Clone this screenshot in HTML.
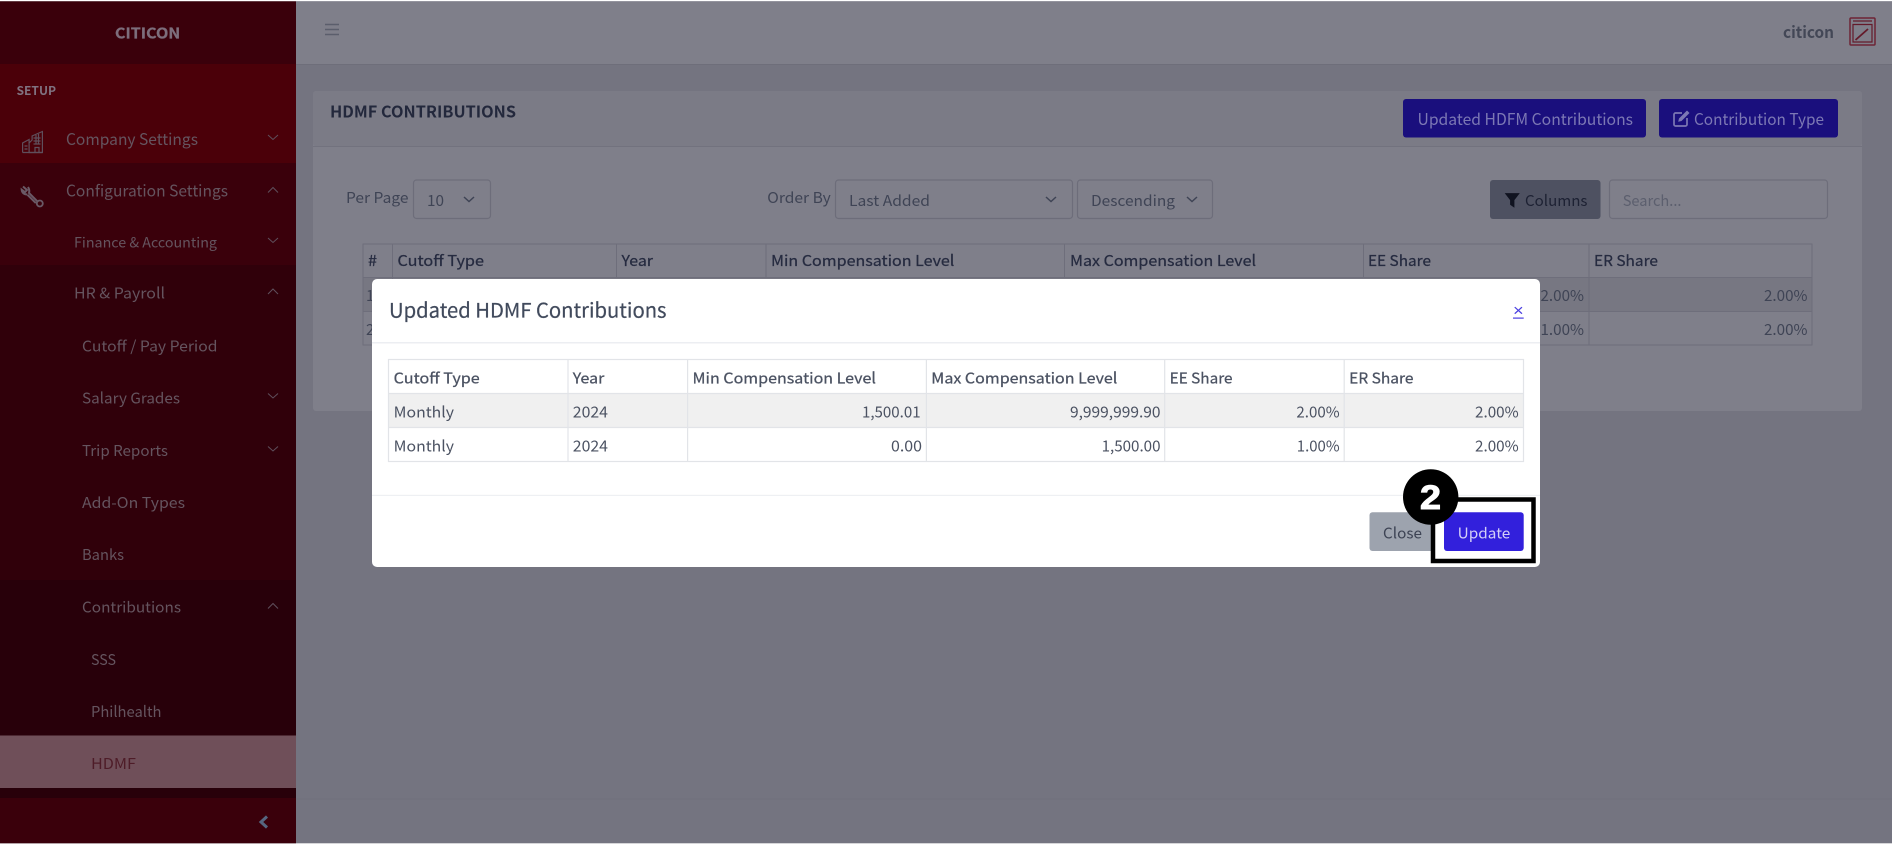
<!DOCTYPE html>
<html lang="en"><head><meta charset="utf-8"><title>HDMF Contributions</title>
<style>
html,body{margin:0;padding:0;background:#fff;width:1892px;height:845px;overflow:hidden}
svg{display:block;font-family:"Noto Sans CJK JP","Liberation Sans",sans-serif}
text{white-space:pre}
.s{fill:#65545f;font-size:15px}
.s2{fill:#65545f;font-size:14px}
.b{font-weight:700}
.h{fill:#262b40;font-size:15px;stroke:#262b40;stroke-width:.25px}
.g{fill:#3f4455;font-size:15px}
.m{fill:#4b5262;font-size:15px}
.mh{fill:#4b5262;font-size:15px;stroke:#4b5262;stroke-width:.25px}
.chev{fill:none;stroke:#5f4f5c;stroke-width:1;}
.sel{fill:#7f7f8a;stroke:#6d6d7a;stroke-width:1.2}
.cv2{fill:none;stroke:#3f4455;stroke-width:1.5}
</style></head><body>
<svg width="1892" height="845" viewBox="0 0 1892 845" xmlns="http://www.w3.org/2000/svg">
<rect width="1892" height="845" fill="#fff"/>
<!-- page background -->
<rect x="0" y="1.3" width="1892" height="842" fill="#747480"/>
<rect x="296" y="1.3" width="1596" height="62.7" fill="#7f7f8a"/>
<rect x="296" y="64" width="1596" height="1" fill="#6e6e7a"/>
<rect x="296" y="798.5" width="1596" height="1" fill="#70707c"/>
<!-- sidebar -->
<rect x="0" y="1.3" width="296" height="842" fill="#3a000b"/>
<rect x="0" y="64" width="296" height="99" fill="#4b0009"/>
<rect x="0" y="265" width="296" height="315" fill="#30000a"/>
<rect x="0" y="580" width="296" height="218" fill="#28000a"/>
<rect x="0" y="735.5" width="296" height="52.5" fill="#6f4f59"/>
<text x="115" y="38.3" class="b" font-size="15" textLength="65.3" lengthAdjust="spacingAndGlyphs" fill="#7d6e7c" stroke="#7d6e7c" stroke-width=".3">CITICON</text>
<text x="16.5" y="95" class="b" font-size="12" textLength="39.5" lengthAdjust="spacingAndGlyphs" fill="#807280">SETUP</text>
<text x="66" y="145" class="s" textLength="132" lengthAdjust="spacingAndGlyphs" style="font-size:16px">Company Settings</text>
<text x="66" y="196.7" class="s" textLength="162" lengthAdjust="spacingAndGlyphs" style="font-size:16px">Configuration Settings</text>
<text x="74" y="247.3" class="s2" textLength="143" lengthAdjust="spacingAndGlyphs">Finance &amp; Accounting</text>
<text x="74" y="298.7" class="s" textLength="91" lengthAdjust="spacingAndGlyphs">HR &amp; Payroll</text>
<text x="82" y="351.3" class="s" textLength="135.5" lengthAdjust="spacingAndGlyphs">Cutoff / Pay Period</text>
<text x="82" y="403.3" class="s" textLength="98" lengthAdjust="spacingAndGlyphs">Salary Grades</text>
<text x="82" y="456" class="s" textLength="86" lengthAdjust="spacingAndGlyphs">Trip Reports</text>
<text x="82" y="508" class="s" textLength="103" lengthAdjust="spacingAndGlyphs">Add-On Types</text>
<text x="82" y="560" class="s" textLength="42" lengthAdjust="spacingAndGlyphs">Banks</text>
<text x="82" y="612.7" class="s" textLength="99" lengthAdjust="spacingAndGlyphs">Contributions</text>
<text x="91" y="665" class="s" textLength="25" lengthAdjust="spacingAndGlyphs">SSS</text>
<text x="91" y="717" class="s" textLength="70.5" lengthAdjust="spacingAndGlyphs">Philhealth</text>
<text x="91" y="769" class="s" textLength="45" lengthAdjust="spacingAndGlyphs" style="fill:#4e1c28">HDMF</text>
<!-- sidebar chevrons -->
<path class="chev" d="M268 135l5 4.5 5-4.5"/>
<path class="chev" d="M268 192.500l5-5 5 5"/>
<path class="chev" d="M268 238l5 4.500 5-4.500"/>
<path class="chev" d="M268 294l5-5 5 5"/>
<path class="chev" d="M268 393.500l5 4.500 5-4.500"/>
<path class="chev" d="M268 446.500l5 4.500 5-4.500"/>
<path class="chev" d="M268 608.500l5-5 5 5"/>
<path d="M267 816.500l-6 5.500 6 5.500" fill="none" stroke="#566680" stroke-width="3"/>
<!-- building icon -->
<g fill="none" stroke="#5f4f5c" stroke-width="1.200">
<path d="M22.600 152.500v-9.500l6.500-3.500v13M29.100 143l3-3v-4l10.300-4.500v21h-13.300z"/>
<path d="M22.600 152.500h19.800M35 152.500v-5h4v5"/>
<path d="M33.500 138h7M33.500 141h7M33.500 144h7M36 135v9.500M38.500 134v10.500M24.500 146h3M24.500 149h3"/>
</g>
<!-- wrench icon -->
<path d="M23 186.500l4 3.500-2 2.200-3.300-2.500c.2 3 2.300 4.800 5.600 4.800" fill="none" stroke="#6a5966" stroke-width="2"/>
<path d="M28 187c1.500 2.500 1.500 4.500 1 6l8.300 8.300M27.500 194.800l8.300 8.300" fill="none" stroke="#6a5966" stroke-width="2"/>
<circle cx="39.800" cy="203.500" r="3" fill="none" stroke="#6a5966" stroke-width="1.800"/>
<!-- topbar -->
<path d="M325 24.500h14M325 29.500h14M325 34.500h14" stroke="#5b5e6c" stroke-width="1.500" fill="none"/>
<text x="1783" y="38" class="b" font-size="16" fill="#434756" textLength="51" lengthAdjust="spacingAndGlyphs">citicon</text>
<g fill="none" stroke="#641a2a">
<rect x="1850" y="18" width="25" height="27" rx="1" stroke-width="1.500" stroke="#6e2434"/>
<path d="M1853 21h19M1853 24.500h19v17.500h-19z" stroke-width="1.200"/>
<path d="M1855.500 40l12.500-11" stroke-width="1.800"/>
</g>
<!-- card -->
<rect x="313" y="91" width="1549" height="320" rx="3" fill="#7f7f8a"/>
<rect x="313" y="91" width="1549" height="55" rx="3" fill="#7b7b86"/>
<rect x="313" y="146" width="1549" height="1" fill="#72727e"/>
<text x="330" y="117.700" class="b" font-size="16" fill="#23283c" textLength="186" lengthAdjust="spacingAndGlyphs">HDMF CONTRIBUTIONS</text>
<rect x="1403" y="99" width="243" height="38.500" rx="3" fill="#1a0f7d"/>
<text x="1417.500" y="125" font-size="16" fill="#7c78b4" textLength="215.500" lengthAdjust="spacingAndGlyphs">Updated HDFM Contributions</text>
<rect x="1659" y="99" width="179" height="38.500" rx="3" fill="#1a0f7d"/>
<path d="M1682 113h-6.500a1.500 1.500 0 0 0-1.500 1.500v10a1.500 1.500 0 0 0 1.500 1.500h10a1.500 1.500 0 0 0 1.500-1.500v-6.500" fill="none" stroke="#7c78b4" stroke-width="1.700"/>
<path d="M1679 118.500l8-8 2.500 2.500-8 8-3.300.7z" fill="#7c78b4"/>
<text x="1694" y="125" font-size="16" fill="#7c78b4" textLength="130" lengthAdjust="spacingAndGlyphs">Contribution Type</text>
<!-- filters -->
<text x="346" y="203" class="g" textLength="62.500" lengthAdjust="spacingAndGlyphs">Per Page</text>
<rect class="sel" x="413.500" y="180" width="77" height="38.500" rx="3"/>
<text x="427" y="206" class="g" textLength="17" lengthAdjust="spacingAndGlyphs">10</text>
<path class="cv2" d="M464 197l5 4.500 5-4.500"/>
<text x="767.300" y="203" class="g" textLength="63.400" lengthAdjust="spacingAndGlyphs">Order By</text>
<rect class="sel" x="835.500" y="180" width="237" height="38.500" rx="3"/>
<text x="849" y="206" class="g" textLength="81" lengthAdjust="spacingAndGlyphs">Last Added</text>
<path class="cv2" d="M1046 197l5 4.500 5-4.500"/>
<rect class="sel" x="1077.500" y="180" width="135" height="38.500" rx="3"/>
<text x="1091" y="206" class="g" textLength="84" lengthAdjust="spacingAndGlyphs">Descending</text>
<path class="cv2" d="M1187 197l5 4.500 5-4.500"/>
<rect x="1490" y="180" width="110.500" height="39" rx="3" fill="#4e5161"/>
<path d="M1505.500 193.500h13.500l-5 6.500v7l-3.500-2.500v-4.500z" fill="#101320" stroke="#101320" stroke-width=".8"/>
<text x="1525" y="206" font-size="15" fill="#1d2133" textLength="62.500" lengthAdjust="spacingAndGlyphs">Columns</text>
<rect class="sel" x="1609.500" y="180" width="218" height="38.500" rx="3"/>
<text x="1622.700" y="206" font-size="15" fill="#5c5f6e" textLength="58.800" lengthAdjust="spacingAndGlyphs">Search...</text>
<!-- background table -->
<g>
<rect x="363" y="244" width="1449" height="101" fill="#7f7f8a" stroke="#6e6e7b"/>
<rect x="363.500" y="277.500" width="1448" height="34" fill="#777782"/>
<path d="M363 277.500h1449M363 311.500h1449M392.500 244v101M616.500 244v33M766 244v33M1064.500 244v33M1363.500 244v33M1589 244v101" stroke="#6e6e7b" fill="none"/>
<text x="368" y="266" class="h" textLength="9" lengthAdjust="spacingAndGlyphs">#</text>
<text x="397.500" y="266" class="h" textLength="86.500" lengthAdjust="spacingAndGlyphs">Cutoff Type</text>
<text x="621.500" y="266" class="h" textLength="31.500" lengthAdjust="spacingAndGlyphs">Year</text>
<text x="771" y="266" class="h" textLength="183.300" lengthAdjust="spacingAndGlyphs">Min Compensation Level</text>
<text x="1070" y="266" class="h" textLength="186" lengthAdjust="spacingAndGlyphs">Max Compensation Level</text>
<text x="1368" y="266" class="h" textLength="63" lengthAdjust="spacingAndGlyphs">EE Share</text>
<text x="1594" y="266" class="h" textLength="64" lengthAdjust="spacingAndGlyphs">ER Share</text>
<text x="366" y="301" class="g">1</text><text x="366" y="335" class="g">2</text>
<text x="1540.500" y="301" class="g" textLength="43.500" lengthAdjust="spacingAndGlyphs">2.00%</text>
<text x="1540.500" y="335" class="g" textLength="43.500" lengthAdjust="spacingAndGlyphs">1.00%</text>
<text x="1764" y="301" class="g" textLength="43.500" lengthAdjust="spacingAndGlyphs">2.00%</text>
<text x="1764" y="335" class="g" textLength="43.500" lengthAdjust="spacingAndGlyphs">2.00%</text>
</g>
<!-- modal -->
<rect x="372" y="279" width="1168" height="288" rx="5" fill="#fff"/>
<text x="389" y="317.700" font-size="20" fill="#414a5c" stroke="#414a5c" stroke-width=".2" textLength="277.500" lengthAdjust="spacingAndGlyphs">Updated HDMF Contributions</text>
<text x="1513" y="316" font-size="17" fill="#4a3fe0" textLength="10.700" lengthAdjust="spacingAndGlyphs" style="font-family:'Liberation Sans',sans-serif">×</text>
<rect x="1513" y="317.500" width="10.700" height="1.200" fill="#4a3fe0"/>
<rect x="372" y="342" width="1168" height="1.500" fill="#eceef2"/>
<rect x="388.500" y="393.500" width="1135" height="34" fill="#f0f0f0"/>
<rect x="388.500" y="359.500" width="1135" height="102" fill="none" stroke="#e2e4e8" stroke-width="1.200"/>
<path d="M388.500 393.500h1135M388.500 427.500h1135M568 359.500v102M687.600 359.500v102M926.400 359.500v102M1164.700 359.500v102M1344.200 359.500v102" stroke="#e2e4e8" stroke-width="1.200" fill="none"/>
<text x="393.700" y="383.300" class="mh" textLength="86" lengthAdjust="spacingAndGlyphs">Cutoff Type</text>
<text x="572.800" y="383.300" class="mh" textLength="31.500" lengthAdjust="spacingAndGlyphs">Year</text>
<text x="692.500" y="383.300" class="mh" textLength="183.400" lengthAdjust="spacingAndGlyphs">Min Compensation Level</text>
<text x="931.300" y="383.300" class="mh" textLength="186" lengthAdjust="spacingAndGlyphs">Max Compensation Level</text>
<text x="1169.700" y="383.300" class="mh" textLength="62.800" lengthAdjust="spacingAndGlyphs">EE Share</text>
<text x="1349.200" y="383.300" class="mh" textLength="64.300" lengthAdjust="spacingAndGlyphs">ER Share</text>
<text x="393.700" y="417.300" class="m" textLength="60.300" lengthAdjust="spacingAndGlyphs">Monthly</text>
<text x="572.800" y="417.300" class="m" textLength="35.200" lengthAdjust="spacingAndGlyphs">2024</text>
<text x="862" y="417.300" class="m" textLength="58.600" lengthAdjust="spacingAndGlyphs">1,500.01</text>
<text x="1070" y="417.300" class="m" textLength="90.500" lengthAdjust="spacingAndGlyphs">9,999,999.90</text>
<text x="1296.400" y="417.300" class="m" textLength="43.200" lengthAdjust="spacingAndGlyphs">2.00%</text>
<text x="1475" y="417.300" class="m" textLength="43.700" lengthAdjust="spacingAndGlyphs">2.00%</text>
<text x="393.700" y="451.300" class="m" textLength="60.300" lengthAdjust="spacingAndGlyphs">Monthly</text>
<text x="572.800" y="451.300" class="m" textLength="35.200" lengthAdjust="spacingAndGlyphs">2024</text>
<text x="891" y="451.300" class="m" textLength="31" lengthAdjust="spacingAndGlyphs">0.00</text>
<text x="1101.600" y="451.300" class="m" textLength="58.900" lengthAdjust="spacingAndGlyphs">1,500.00</text>
<text x="1296.800" y="451.300" class="m" textLength="42.800" lengthAdjust="spacingAndGlyphs">1.00%</text>
<text x="1475" y="451.300" class="m" textLength="43.700" lengthAdjust="spacingAndGlyphs">2.00%</text>
<rect x="372" y="494.800" width="1168" height="1.200" fill="#eef0f3"/>
<rect x="1369.500" y="512.300" width="70" height="38.700" rx="3" fill="#9da3ae"/>
<text x="1383" y="538.300" font-size="15" fill="#3d4354" textLength="39" lengthAdjust="spacingAndGlyphs">Close</text>
<rect x="1433" y="499.500" width="100.500" height="61.500" fill="#fff" stroke="#000" stroke-width="4.500"/>
<rect x="1444" y="512.300" width="79.700" height="38.700" rx="3" fill="#3220dc"/>
<text x="1457.700" y="538.300" font-size="15" fill="#d4d0f7" textLength="52.600" lengthAdjust="spacingAndGlyphs">Update</text>
<circle cx="1430.700" cy="497" r="27.700" fill="#000"/>
<text x="1420" y="509" font-size="34" font-weight="700" fill="#fff" stroke="#fff" stroke-width="1" textLength="21" lengthAdjust="spacingAndGlyphs" style="font-family:'Liberation Sans',sans-serif">2</text>
</svg>
</body></html>
